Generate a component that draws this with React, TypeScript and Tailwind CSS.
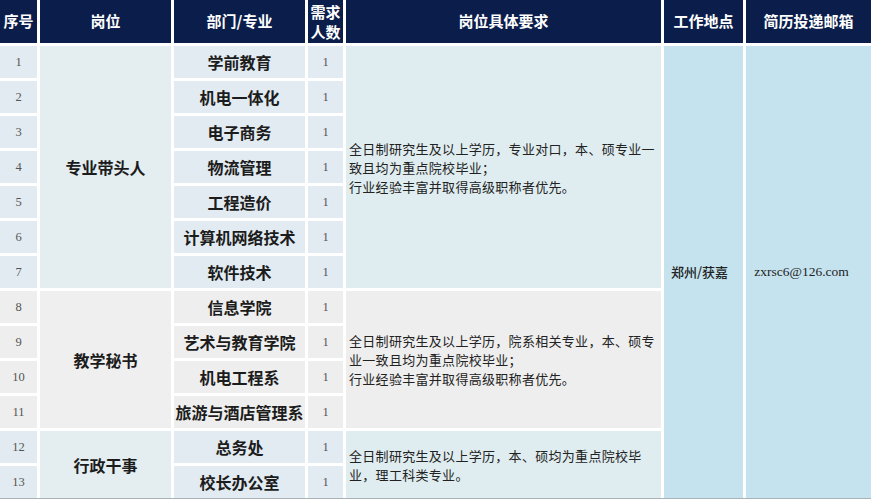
import React from 'react';

const headFont = { fontFamily: '"Noto Sans CJK SC", "Noto Sans", sans-serif' };

const groups = [
  {
    title: '专业带头人',
    depts: ['学前教育', '机电一体化', '电子商务', '物流管理', '工程造价', '计算机网络技术', '软件技术'],
    req: ['全日制研究生及以上学历，专业对口，本、硕专业一', '致且均为重点院校毕业；', '行业经验丰富并取得高级职称者优先。'],
    tone: 'blue',
  },
  {
    title: '教学秘书',
    depts: ['信息学院', '艺术与教育学院', '机电工程系', '旅游与酒店管理系'],
    req: ['全日制研究生及以上学历，院系相关专业，本、硕专', '业一致且均为重点院校毕业；', '行业经验丰富并取得高级职称者优先。'],
    tone: 'gray',
  },
  {
    title: '行政干事',
    depts: ['总务处', '校长办公室'],
    req: ['全日制研究生及以上学历，本、硕均为重点院校毕', '业，理工科类专业。'],
    tone: 'blue',
  },
];

const spans: Record<number, string> = {
  2: 'row-span-2',
  4: 'row-span-4',
  7: 'row-span-7',
};

export default function App() {
  let seq = 0;
  return (
    <div className="w-[871px] h-[500px] bg-white overflow-hidden" style={headFont}>
      <div className="grid grid-cols-[37px_131px_131px_35px_315px_79px_1fr] grid-rows-[43px_repeat(13,32px)] gap-[3px]">
        <div className="bg-[#0b1e4b] text-white font-bold text-[15px] flex items-center justify-center">序号</div>
        <div className="bg-[#0b1e4b] text-white font-bold text-[15px] flex items-center justify-center">岗位</div>
        <div className="bg-[#0b1e4b] text-white font-bold text-[15px] flex items-center justify-center">部门/专业</div>
        <div className="bg-[#0b1e4b] text-white font-bold text-[15px] leading-[20px] flex items-center justify-center text-center">
          需求<br />人数
        </div>
        <div className="bg-[#0b1e4b] text-white font-bold text-[15px] flex items-center justify-center">岗位具体要求</div>
        <div className="bg-[#0b1e4b] text-white font-bold text-[15px] flex items-center justify-center">工作地点</div>
        <div className="bg-[#0b1e4b] text-white font-bold text-[15px] flex items-center justify-center">简历投递邮箱</div>

        {groups.map((g, gi) => {
          const cell = g.tone === 'blue' ? 'bg-[#e2ebf1]' : 'bg-[#eeeeee]';
          const reqBg = g.tone === 'blue' ? 'bg-[#e0edf0]' : 'bg-[#eeeeee]';
          const posBg = g.tone === 'blue' ? 'bg-[#e4eef1]' : 'bg-[#efefef]';
          return g.depts.map((d, di) => {
            seq += 1;
            return (
              <React.Fragment key={`${gi}-${di}`}>
                <div className={`${cell} flex items-center justify-center text-[12.5px] text-[#555] font-['Liberation_Serif',serif]`}>
                  {seq}
                </div>
                {di === 0 && (
                  <div className={`${posBg} ${spans[g.depts.length]} flex items-center justify-center text-[16px] font-semibold text-[#1c1c1c]`}>
                    {g.title}
                  </div>
                )}
                <div className={`${cell} flex items-center justify-center text-[16px] font-bold text-[#1c1c1c] whitespace-nowrap`}>
                  {d}
                </div>
                <div className={`${cell} flex items-center justify-center text-[12.5px] text-[#555] font-['Liberation_Serif',serif]`}>
                  1
                </div>
                {di === 0 && (
                  <div className={`${reqBg} ${spans[g.depts.length]} flex flex-col justify-center pl-[3px] text-[13px] tracking-[0.3px] leading-[19px] text-[#222] whitespace-nowrap`}>
                    {g.req.map((line) => (
                      <span key={line}>{line}</span>
                    ))}
                  </div>
                )}
                {gi === 0 && di === 0 && (
                  <>
                    <div className="bg-[#c5e3ef] row-span-13 flex items-center justify-center pr-[8px] text-[13px] font-medium text-[#222]">
                      郑州/获嘉
                    </div>
                    <div className="bg-[#c5e3ef] row-span-13 flex items-center justify-center pr-[14px] text-[13.5px] text-[#222] font-['Liberation_Serif',serif]">
                      zxrsc6@126.com
                    </div>
                  </>
                )}
              </React.Fragment>
            );
          });
        })}
      </div>
      <div className="h-px bg-[#a9b4b8]" />
    </div>
  );
}
